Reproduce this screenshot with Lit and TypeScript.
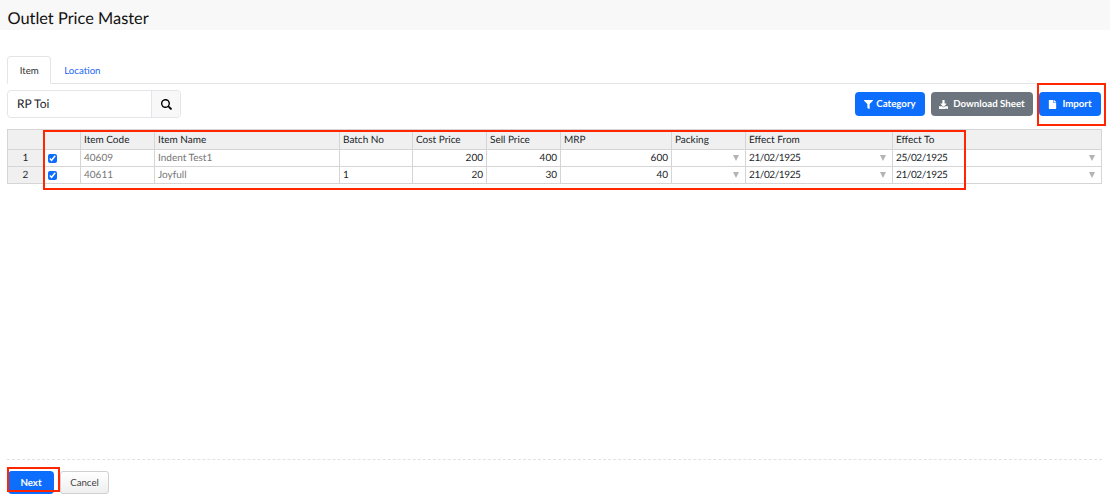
import {LitElement, css, html, svg} from 'lit';
import {customElement, property, state} from 'lit/decorators.js';
import {classMap} from 'lit/directives/class-map.js';

interface Item {
    code: string;
    name: string;
    batch: string;
    cost: number;
    sell: number;
    mrp: number;
    from: string;
    to: string;
}

const icons = {
    search: svg`<path d="M505 443 405 343a24 24 0 0 0-17-7h-16a208 208 0 1 0-36 36v16c0 6 3 12 7 17l100 100c9 9 24 9 34 0l28-28c9-10 9-25 0-34zM208 352a144 144 0 1 1 0-288 144 144 0 0 1 0 288z"/>`,
    filter: svg`<path d="M488 0H24C3 0-8 26 7 41l185 185v206c0 8 4 15 10 20l80 56c16 11 38 0 38-20V226L505 41C520 26 509 0 488 0z"/>`,
    download: svg`<path d="M216 0h80c13 0 24 11 24 24v168h88c18 0 27 21 14 34L270 378c-7 7-20 7-28 0L90 226c-13-13-4-34 14-34h88V24c0-13 11-24 24-24zM512 376v112c0 13-11 24-24 24H24c-13 0-24-11-24-24V376c0-13 11-24 24-24h147l49 49c20 20 52 20 72 0l49-49h147c13 0 24 11 24 24zM388 464a20 20 0 1 0-40 0 20 20 0 0 0 40 0zm64 0a20 20 0 1 0-40 0 20 20 0 0 0 40 0z" fill-rule="evenodd"/>`,
    file: svg`<path d="M288 136V0H72C59 0 48 11 48 24v464c0 13 11 24 24 24h368c13 0 24-11 24-24V160H312c-13 0-24-11-24-24zm176-14v6H320V0h6c6 0 13 3 17 7l114 98c4 4 7 11 7 17z"/>`,
};

@customElement('price-button')
export class PriceButton extends LitElement {

    @property() icon: keyof typeof icons | '' = '';
    @property({reflect: true}) variant = 'primary';

    static styles = css`
        :host {
            display: block;
        }

        button {
            box-sizing: border-box;
            display: flex;
            align-items: center;
            justify-content: center;
            width: 100%;
            height: 100%;
            margin: 0;
            padding: 0;
            border: none;
            border-radius: 4px;
            background: #0d6efd;
            color: #fff;
            font: bold 9.7px/14px Lato, sans-serif;
            text-rendering: geometricPrecision;
            white-space: pre;
        }

        :host([variant="secondary"]) button {
            background: #6c757d;
        }

        :host([variant="plain"]) button {
            border: 1px solid #d0d0d0;
            border-radius: 3px;
            background: linear-gradient(#fff, #efefef);
            color: #444;
            font-weight: normal;
        }

        svg {
            width: 9px;
            height: 9px;
            margin-right: var(--icon-gap, 3px);
            fill: currentColor;
        }
    `;

    render() {
        return html`
            <button>${this.icon ? html`<svg viewBox="0 0 512 512">${icons[this.icon]}</svg>` : ''}<slot></slot></button>
        `;
    }
}

@customElement('app-root')
export class AppRoot extends LitElement {

    @state() tab = 'Item';

    @state() items: Item[] = [
        {code: '40609', name: 'Indent Test1', batch: '', cost: 200, sell: 400, mrp: 600, from: '21/02/1925', to: '25/02/1925'},
        {code: '40611', name: 'Joyfull', batch: '1', cost: 20, sell: 30, mrp: 40, from: '21/02/1925', to: '21/02/1925'},
    ];

    static styles = css`
        :host {
            position: relative;
            display: flex;
            flex-direction: column;
            box-sizing: border-box;
            height: 494px;
            overflow: hidden;
            background: #fff;
            color: #212529;
            font-family: Lato, sans-serif;
            text-rendering: geometricPrecision;
        }

        header {
            height: 30px;
            margin-right: 4px;
            background: #f8f8f8;
        }

        h1 {
            margin: 0;
            padding: 6px 0 0 7.4px;
            font-size: 16.4px;
            font-weight: normal;
            line-height: 25px;
            color: #111;
        }

        nav {
            display: flex;
            height: 27px;
            margin: 26px 12px 0 7px;
            border-bottom: 1px solid #e3e5e8;
        }

        nav a {
            box-sizing: border-box;
            height: 28px;
            padding: 6px 11.7px 0;
            border: 1px solid transparent;
            border-radius: 4px 4px 0 0;
            color: #2467f5;
            font-size: 9.7px;
            line-height: 16px;
        }

        nav a.active {
            border-color: #e3e5e8;
            border-bottom-color: #fff;
            background: #fff;
            color: #333;
        }

        .toolbar {
            display: flex;
            align-items: center;
            height: 28px;
            margin: 6px 13px 0 7px;
        }

        .search {
            box-sizing: border-box;
            display: flex;
            width: 174px;
            height: 28px;
            border: 1px solid #e3e5e8;
            border-radius: 4px;
            overflow: hidden;
        }

        .search span {
            flex: 1;
            padding-left: 9px;
            font-size: 12px;
            line-height: 26px;
        }

        .search i {
            display: flex;
            align-items: center;
            justify-content: center;
            width: 28px;
            border-left: 1px solid #e3e5e8;
            background: #f8f8f8;
        }

        .search svg {
            width: 11px;
            height: 11px;
        }

        .actions {
            display: flex;
            gap: 6px;
            height: 24px;
            margin-left: auto;
        }

        .category { width: 70px; }
        .download { width: 102px; --icon-gap: 5px; }
        .import { width: 62px; --icon-gap: 5px; }

        table {
            width: 1095px;
            margin: 11px 0 0 7px;
            border-collapse: collapse;
            table-layout: fixed;
            font-size: 10px;
            line-height: 14px;
        }

        td, th {
            box-sizing: border-box;
            height: 17px;
            padding: 0 3px 1px;
            border: 1px solid #d5d5d5;
            font-weight: normal;
            text-align: left;
            white-space: nowrap;
        }

        thead th {
            height: 20px;
            padding: 1px 3px 0;
            background: #f0f0f0;
        }

        tbody th {
            background: #f0f0f0;
            text-align: center;
        }

        .muted {
            color: #777;
        }

        .number {
            text-align: right;
        }

        .picker div {
            display: flex;
            justify-content: space-between;
            align-items: center;
            letter-spacing: -0.4px;
        }

        .picker div::after {
            content: '';
            margin-right: 3px;
            border: 3px solid transparent;
            border-top: 6px solid #b4b4b4;
            border-bottom: none;
        }

        input {
            display: block;
            width: 9px;
            height: 9px;
            margin: 2px 0 0 1px;
            accent-color: #0d6efd;
        }

        footer {
            display: flex;
            gap: 6px;
            margin: auto 12px 0 7px;
            padding: 11px 0 0 1px;
            height: 23px;
            border-top: 1px dashed #e2e2e2;
        }

        .next { width: 46px; }
        .cancel { width: 49px; }

        /* Highlight frames float above the form */
        .mark {
            position: absolute;
            box-sizing: border-box;
            border: 2px solid #ff2600;
            pointer-events: none;
        }

        .mark.grid { left: 43px; top: 130px; width: 923px; height: 60px; }
        .mark.upload { left: 1037px; top: 83px; width: 69px; height: 43px; }
        .mark.step { left: 7px; top: 467px; width: 53px; height: 25px; }
    `;

    renderRow(item: Item, index: number) {
        return html`
            <tr>
                <th>${index + 1}</th>
                <td><input type="checkbox" checked></td>
                <td class="muted">${item.code}</td>
                <td class="muted">${item.name}</td>
                <td>${item.batch}</td>
                <td class="number">${item.cost}</td>
                <td class="number">${item.sell}</td>
                <td class="number">${item.mrp}</td>
                <td class="picker"><div><span></span></div></td>
                <td class="picker"><div><span>${item.from}</span></div></td>
                <td class="picker"><div><span>${item.to}</span></div></td>
            </tr>
        `;
    }

    render() {
        const widths = [36, 37, 74, 185, 73, 74, 74, 111, 74, 147, 209];
        const headings = ['', '', 'Item Code', 'Item Name', 'Batch No', 'Cost Price', 'Sell Price', 'MRP', 'Packing', 'Effect From', 'Effect To'];

        return html`
            <header><h1>Outlet Price Master</h1></header>
            <nav>
                ${['Item', 'Location'].map(name => html`
                    <a class=${classMap({active: name === this.tab})} @click=${() => this.tab = name}>${name}</a>
                `)}
            </nav>
            <div class="toolbar">
                <div class="search">
                    <span>RP Toi</span>
                    <i><svg viewBox="0 0 512 512">${icons.search}</svg></i>
                </div>
                <div class="actions">
                    <price-button class="category" icon="filter">Category</price-button>
                    <price-button class="download" icon="download" variant="secondary">Download Sheet</price-button>
                    <price-button class="import" icon="file">Import</price-button>
                </div>
            </div>
            <table>
                <colgroup>${widths.map(width => html`<col style="width: ${width}px">`)}</colgroup>
                <thead><tr>${headings.map(heading => html`<th>${heading}</th>`)}</tr></thead>
                <tbody>${this.items.map((item, index) => this.renderRow(item, index))}</tbody>
            </table>
            <footer>
                <price-button class="next">Next</price-button>
                <price-button class="cancel" variant="plain">Cancel</price-button>
            </footer>
            <div class="mark grid"></div>
            <div class="mark upload"></div>
            <div class="mark step"></div>
        `;
    }
}
